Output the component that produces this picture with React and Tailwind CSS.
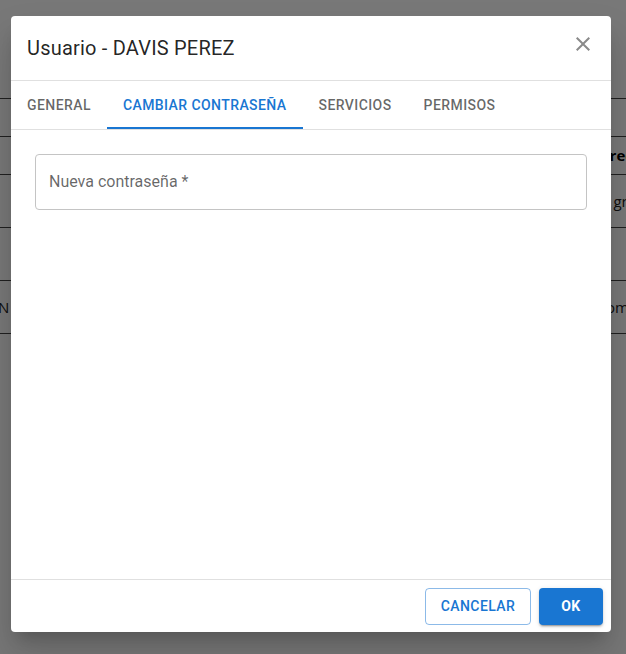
import React from "react";

const tabs = ["General", "Cambiar contraseña", "Servicios", "Permisos"];

const App = () => {
  return (
    <div className="relative w-[626px] h-[654px] overflow-hidden bg-white font-['Roboto',sans-serif]">
      {/* page behind the dialog */}
      <div className="pt-[98px] text-[15px] text-black font-['Open_Sans',sans-serif]">
        <div className="h-[38px] border-t border-[#444]"></div>
        <div className="h-[38px] border-t border-[#444] flex items-center justify-end font-bold">
          <span className="-mr-[7px]">rec</span>
        </div>
        <div className="h-[53px] border-t border-[#444] flex items-center justify-end text-[#222]">
          <span className="-mr-[10px]">gra</span>
        </div>
        <div className="h-[53px] border-t border-[#444]"></div>
        <div className="h-[54px] border-t border-b border-[#444] flex items-center justify-between text-[#222]">
          <span className="-ml-[2px]">N</span>
          <span className="-mr-[12px]">omb</span>
        </div>
      </div>

      {/* backdrop */}
      <div className="absolute inset-0 bg-black/[0.53]"></div>

      {/* dialog */}
      <div className="absolute left-[11px] top-[16px] w-[600px] h-[616px] bg-white rounded-[4px] shadow-[0_11px_15px_-7px_rgba(0,0,0,0.2),0_24px_38px_3px_rgba(0,0,0,0.14)] flex flex-col">
        <div className="h-[65px] px-[16px] flex items-center justify-between border-b border-[#e0e0e0]">
          <h2 className="text-[20px] leading-[32px] font-normal text-[rgba(0,0,0,0.87)] tracking-[0.01em]">
            Usuario - DAVIS PEREZ
          </h2>
          <button className="w-[40px] h-[40px] -mr-[8px] -mt-[8px] flex items-center justify-center text-[#8a8a8a]">
            <svg viewBox="0 0 24 24" className="w-[24px] h-[24px]" fill="currentColor">
              <path d="M19 6.41 17.59 5 12 10.59 6.41 5 5 6.41 10.59 12 5 17.59 6.41 19 12 13.41 17.59 19 19 17.59 13.41 12z" />
            </svg>
          </button>
        </div>

        <div className="h-[49px] flex border-b border-[#e0e0e0]">
          {tabs.map((t, i) => (
            <div
              key={t}
              className={
                i === 1
                  ? "relative px-[16px] h-[48px] flex items-center text-[14px] font-medium uppercase tracking-[0.03em] text-[#1976d2]"
                  : "relative px-[16px] h-[48px] flex items-center text-[14px] font-medium uppercase tracking-[0.03em] text-[rgba(0,0,0,0.6)]"
              }
            >
              {t}
              {i === 1 && (
                <span className="absolute left-0 right-0 bottom-0 h-[2px] bg-[#1976d2]"></span>
              )}
            </div>
          ))}
        </div>

        <div className="flex-1 p-[24px]">
          <div className="h-[56px] border border-[#c4c4c4] rounded-[4px] px-[13px] flex items-center">
            <span className="text-[16px] text-[rgba(0,0,0,0.6)]">Nueva contraseña *</span>
          </div>
        </div>

        <div className="h-[53px] border-t border-[#e0e0e0] flex items-center justify-end gap-[8px] px-[8px]">
          <button className="w-[106px] h-[37px] rounded-[4px] border border-[rgba(25,118,210,0.5)] text-[#1976d2] text-[14px] font-medium uppercase tracking-[0.03em]">
            Cancelar
          </button>
          <button className="w-[64px] h-[37px] rounded-[4px] bg-[#1976d2] text-white text-[14px] font-bold uppercase tracking-[0.03em] shadow-[0_3px_1px_-2px_rgba(0,0,0,0.2),0_2px_2px_0_rgba(0,0,0,0.14),0_1px_5px_0_rgba(0,0,0,0.12)]">
            OK
          </button>
        </div>
      </div>
    </div>
  );
};

export default App;
